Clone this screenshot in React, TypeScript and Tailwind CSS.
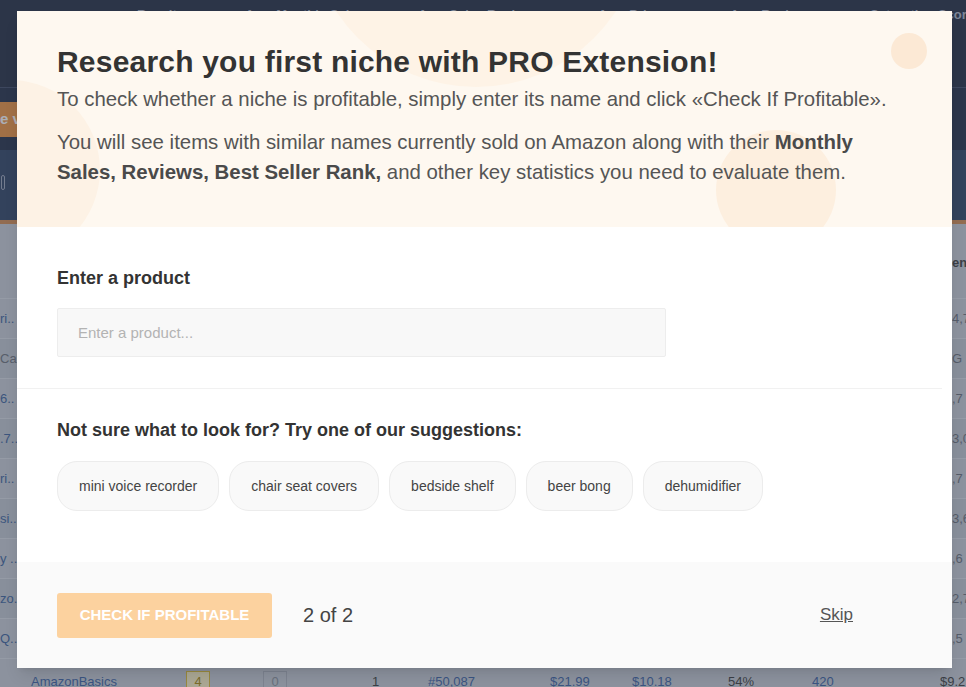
import React from "react";

const columns = [
  { label: "Results", w: "w-[108px]" },
  { label: "Avg. Monthly Sales", w: "w-[173px]" },
  { label: "Avg. Sales Rank", w: "w-[180px]" },
  { label: "Avg. Price", w: "w-[132px]" },
  { label: "Avg. Reviews", w: "w-[140px]" },
  { label: "Saturation Score", w: "w-[120px]" },
];

const rows = [
  { left: "ri..", right: "4,7", link: true },
  { left: "Cal", right: "G", link: false },
  { left: "6..", right: ",7", link: true },
  { left: ".7..", right: "3,0", link: true },
  { left: "ri..", right: ",7", link: true },
  { left: "si..", right: "3,6", link: true },
  { left: "y ..", right: ",6", link: true },
  { left: "zo..", right: "2,7", link: true },
  { left: "Q..", right: ",5", link: true },
];

const suggestions = [
  "mini voice recorder",
  "chair seat covers",
  "bedside shelf",
  "beer bong",
  "dehumidifier",
];

function BackgroundPage() {
  return (
    <div className="flex flex-col h-full">
      <div className="h-[88px] bg-[#3c4558] flex pt-[7px] pl-[137px] border-b border-[#56627a] shrink-0">
        {columns.map((c) => (
          <div
            key={c.label}
            className={`${c.w} shrink-0 text-[13px] leading-[15px] font-bold text-[#b8c0cf] whitespace-nowrap`}
          >
            {c.label}
          </div>
        ))}
      </div>
      <div className="h-[62px] bg-[#3d485d] flex items-center shrink-0">
        <div className="h-[35px] w-[60px] -ml-[28px] bg-[#f0a055] rounded text-white text-[15px] font-bold flex items-center pl-[28px]">
          e v
        </div>
      </div>
      <div className="h-[70px] bg-[#485977] shrink-0 flex items-end pb-[30px] pl-[1px]">
        <div className="w-[4px] h-[15px] border border-[#a9b2c4] rounded-sm" />
      </div>
      <div className="h-[4px] bg-[#d99a66] shrink-0" />
      <div className="bg-[#cfd5dc] flex-1 flex flex-col">
        <div className="h-[75px] flex items-center justify-end pt-[4px] border-b border-[#dde2e8] shrink-0">
          <span className="text-[13px] font-bold text-[#555] w-[14px] overflow-hidden whitespace-nowrap">
            enu
          </span>
        </div>
        {rows.map((r, i) => (
          <div
            key={i}
            className={`h-[40px] flex items-center justify-between border-b border-[#dde2e8] shrink-0 ${
              i % 2 === 1 ? "bg-[#c9d0d8]" : ""
            }`}
          >
            <span
              className={`text-[13px] whitespace-nowrap ${
                r.link ? "text-[#5577aa]" : "text-[#80858c]"
              }`}
            >
              {r.left}
            </span>
            <span className="text-[13px] text-[#7d838c] w-[14px] whitespace-nowrap overflow-hidden">
              {r.right}
            </span>
          </div>
        ))}
        <div className="h-[40px] flex items-center pt-[6px] text-[13px] shrink-0">
          <div className="w-[186px] pl-[31px] text-[#5476b1]">AmazonBasics</div>
          <div className="w-[77px]">
            <div className="w-[24px] h-[22px] border border-[#e3c64a] bg-[#fff6cc] text-[#b59a2a] flex items-center justify-center">
              4
            </div>
          </div>
          <div className="w-[109px]">
            <div className="w-[24px] h-[22px] border border-[#b9bec6] text-[#9aa0a8] flex items-center justify-center">
              0
            </div>
          </div>
          <div className="w-[56px] text-[#555]">1</div>
          <div className="w-[122px] text-[#5476b1]">#50,087</div>
          <div className="w-[82px] text-[#5476b1]">$21.99</div>
          <div className="w-[96px] text-[#5476b1]">$10.18</div>
          <div className="w-[84px] text-[#555]">54%</div>
          <div className="w-[128px] text-[#5476b1]">420</div>
          <div className="text-[#555] whitespace-nowrap">$9.2</div>
        </div>
      </div>
      <div className="h-[4px] bg-black shrink-0" />
    </div>
  );
}

function OnboardingModal() {
  return (
    <div className="w-[935px] h-[657px] bg-white flex flex-col overflow-hidden shadow-lg">
      <div className="relative overflow-hidden bg-[#fef8f0] px-10 pt-[33px] pb-[40px] shrink-0">
        <div className="absolute left-[292px] -top-[258px] w-[334px] h-[334px] rounded-full bg-[#fef3e6]" />
        <div className="absolute -left-[97px] top-[69px] w-[180px] h-[180px] rounded-full bg-[#fdf2e5]" />
        <div className="absolute left-[699px] top-[119px] w-[120px] h-[120px] rounded-full bg-[#fdefdf]" />
        <div className="absolute left-[874px] top-[22px] w-[36px] h-[36px] rounded-full bg-[#fce9d5]" />
        <div className="relative">
          <h1 className="text-[30px] leading-[36px] font-bold tracking-[0.2px] text-[#333] mb-[4px]">
            Research you first niche with PRO Extension!
          </h1>
          <p className="text-[20.4px] leading-[30px] text-[#555] mb-[13px]">
            To check whether a niche is profitable, simply enter its name and click «Check If Profitable».
          </p>
          <p className="text-[20.4px] leading-[30px] text-[#555] pr-[10px]">
            You will see items with similar names currently sold on Amazon along with their{" "}
            <b className="text-[#4a4a4a]">Monthly Sales, Reviews, Best Seller Rank,</b> and other key
            statistics you need to evaluate them.
          </p>
        </div>
      </div>

      <div className="flex-1 bg-white">
        <div className="px-10 pt-[38px] pb-[31px]">
          <label className="block text-[18px] leading-[27px] font-bold text-[#333] mb-[16px]">
            Enter a product
          </label>
          <input
            type="text"
            placeholder="Enter a product..."
            className="w-[609px] h-[49px] bg-[#f8f8f8] border border-[#ededed] rounded-[2px] px-5 text-[15px] text-[#333] placeholder:text-[#b3b3b3] outline-none"
          />
        </div>
        <div className="h-px bg-[#f1f1f1] mr-[10px]" />
        <div className="px-10 pt-[28px]">
          <h2 className="text-[18px] leading-[27px] font-bold text-[#333] mb-[17px]">
            Not sure what to look for? Try one of our suggestions:
          </h2>
          <div className="flex gap-[10px]">
            {suggestions.map((s) => (
              <button
                key={s}
                className="h-[50px] px-[21px] rounded-[20px] bg-[#f9f9f9] border border-[#ececec] text-[14px] text-[#444]"
              >
                {s}
              </button>
            ))}
          </div>
        </div>
      </div>

      <div className="h-[106px] bg-[#fafafa] px-10 flex items-center shrink-0">
        <button className="h-[45px] w-[215px] rounded-[3px] bg-[#fcd29f] text-white text-[15px] font-bold uppercase">
          Check if profitable
        </button>
        <span className="ml-[31px] text-[20px] text-[#444]">2 of 2</span>
        <a href="#" className="ml-auto mr-[59px] text-[17px] text-[#555] underline">
          Skip
        </a>
      </div>
    </div>
  );
}

export default function App() {
  return (
    <div className="relative w-full h-[687px] overflow-hidden font-['Liberation_Sans',Arial,sans-serif]">
      <BackgroundPage />
      <div className="absolute inset-0 bg-slate-900/35 pl-[17px] pt-[11px]">
        <OnboardingModal />
      </div>
    </div>
  );
}
